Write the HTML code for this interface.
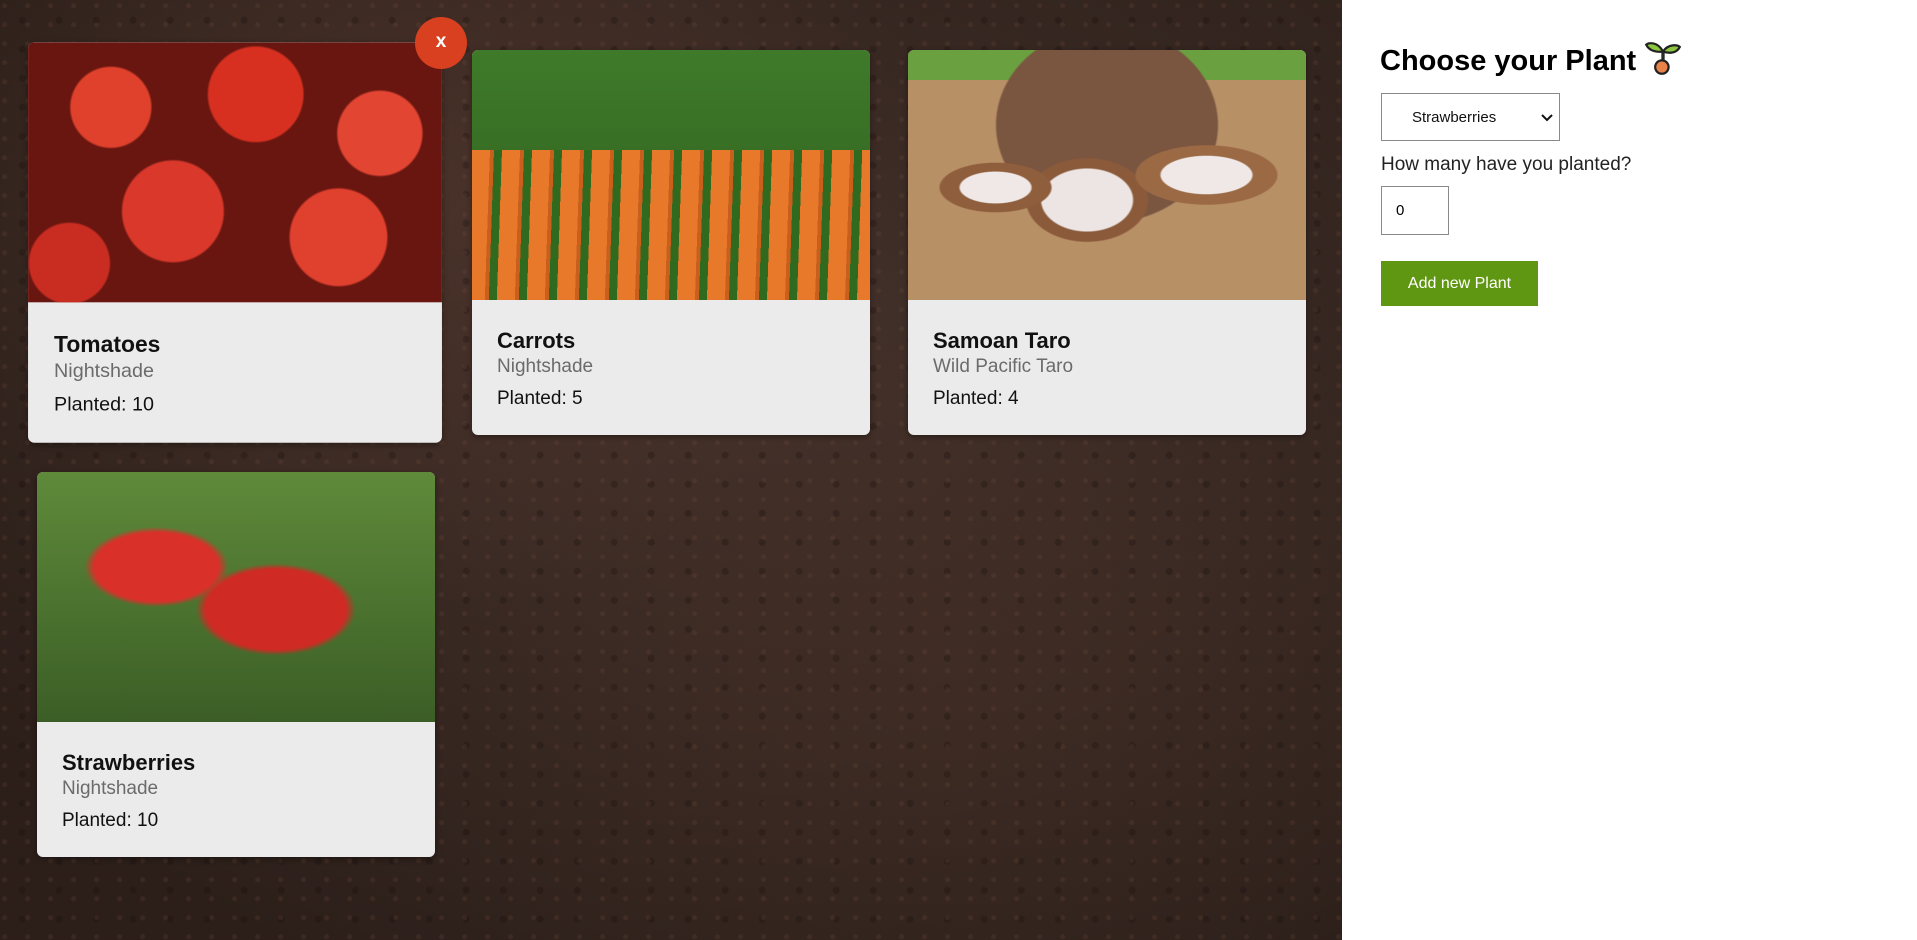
<!DOCTYPE html>
<html><head><meta charset="utf-8"><style>
*{box-sizing:border-box;margin:0;padding:0}
body{width:1917px;height:940px;overflow:hidden;font-family:"Liberation Sans",sans-serif;position:relative;background:#fff}
.soil{position:absolute;left:0;top:0;width:1342px;height:940px;background:
radial-gradient(circle at 20% 30%,rgba(120,80,60,.2) 0 2px,transparent 3px) 0 0/23px 19px,
radial-gradient(circle at 60% 70%,rgba(20,10,8,.25) 0 3px,transparent 4px) 0 0/37px 29px,
radial-gradient(ellipse at 30% 20%,rgba(90,60,48,.5),transparent 40%),
radial-gradient(ellipse at 70% 70%,rgba(70,48,38,.5),transparent 45%),
radial-gradient(ellipse at 60% 40%,#42302a,#2c1f1a 85%);}
.card{position:absolute;width:398px;height:385px;background:#ebebeb;border-radius:6px;overflow:hidden;box-shadow:0 2px 6px rgba(0,0,0,.35)}
.img{height:250px;position:relative;overflow:hidden}
.t{position:absolute;left:25px;top:28px;font-size:22px;font-weight:bold;color:#111}
.s{position:absolute;left:25px;top:56px;font-size:19px;color:#6b6b6b}
.p{position:absolute;left:25px;top:88px;font-size:19px;color:#111}
.txt{position:relative}
.x{position:absolute;width:52px;height:52px;border-radius:50%;background:#d8401f;color:#fff;font-size:19px;text-align:center;line-height:50px;font-weight:bold}
.side{position:absolute;left:1342px;top:0;width:575px;height:940px;background:#fff}
h1{position:absolute;left:38px;top:38px;font-size:29px;font-weight:bold;color:#000}
.sel{position:absolute;left:39px;top:93px;width:179px;height:48px;border:1px solid #8a8a8a;font-size:15px;padding:15px 0 0 30px;color:#111}
.lab{position:absolute;left:39px;top:154px;font-size:19px;color:#222}
.num{position:absolute;left:39px;top:186px;width:68px;height:49px;border:1px solid #8a8a8a;font-size:15px;padding:15px 0 0 14px}
.btn{position:absolute;left:39px;top:261px;width:157px;height:45px;background:#5f9612;color:#fff;font-size:16px;text-align:center;line-height:45px}
</style></head><body>
<div class="soil"></div>

<div class="card" style="left:36px;top:50px;transform:scale(1.04)">
<div class="img" style="background:
radial-gradient(circle at 20% 25%,#e0412c 0 38px,transparent 40px),
radial-gradient(circle at 55% 20%,#d73020 0 45px,transparent 47px),
radial-gradient(circle at 85% 35%,#e24532 0 40px,transparent 42px),
radial-gradient(circle at 35% 65%,#d9382a 0 48px,transparent 50px),
radial-gradient(circle at 75% 75%,#e0402e 0 46px,transparent 48px),
radial-gradient(circle at 10% 85%,#c92d22 0 38px,transparent 40px),
#6a1610"></div>
<div class="txt"><div class="t">Tomatoes</div><div class="s">Nightshade</div><div class="p">Planted: 10</div></div>
</div>
<div class="x" style="left:415px;top:17px">x</div>

<div class="card" style="left:472px;top:50px">
<div class="img" style="background:
repeating-linear-gradient(92deg,#e8782a 0 18px,#c85f1c 18px 22px,#2f6a1e 22px 30px) 0 100px/100% 150px no-repeat,
linear-gradient(180deg,#3f7a2a,#2d5e1c)"></div>
<div class="txt"><div class="t">Carrots</div><div class="s">Nightshade</div><div class="p">Planted: 5</div></div>
</div>

<div class="card" style="left:908px;top:50px">
<div class="img" style="background:
radial-gradient(ellipse at 75% 50%,#efe8e6 0 45px,#9b6a45 47px 70px,transparent 72px),
radial-gradient(ellipse at 22% 55%,#efe8e6 0 35px,#8f5e3c 37px 55px,transparent 57px),
radial-gradient(ellipse at 45% 60%,#ede5e3 0 45px,#8a5a3a 47px 60px,transparent 62px),
radial-gradient(ellipse at 50% 30%,#7a5540 0 110px,transparent 112px),
linear-gradient(180deg,#6aa040 0 12%,#b89066 12%)"></div>
<div class="txt"><div class="t">Samoan Taro</div><div class="s">Wild Pacific Taro</div><div class="p">Planted: 4</div></div>
</div>

<div class="card" style="left:37px;top:472px">
<div class="img" style="background:
radial-gradient(ellipse at 30% 38%,#d9302a 0 62px,transparent 72px),
radial-gradient(ellipse at 60% 55%,#cf2a24 0 70px,transparent 80px),
linear-gradient(180deg,#5f8a3a,#3b5e26)"></div>
<div class="txt"><div class="t">Strawberries</div><div class="s">Nightshade</div><div class="p">Planted: 10</div></div>
</div>

<div class="side">
<h1>Choose your Plant <svg width="38" height="38" viewBox="0 0 34 34" style="vertical-align:-6px"><path d="M17 22 V12" stroke="#2a2a2a" stroke-width="3" fill="none"/><path d="M17 12 C12 3 4 4 2 6 C5 12 12 13 17 12Z" fill="#8cc63f" stroke="#222" stroke-width="2"/><path d="M17 12 C22 5 30 6 32 8 C29 14 22 14 17 12Z" fill="#8cc63f" stroke="#222" stroke-width="2"/><circle cx="16" cy="26" r="6" fill="#e8834a" stroke="#222" stroke-width="2"/></svg></h1>
<div class="sel">Strawberries<svg width="12" height="8" viewBox="0 0 12 8" style="position:absolute;right:6px;top:20px"><path d="M1 1 L6 6 L11 1" stroke="#111" stroke-width="2" fill="none"/></svg></div>
<div class="lab">How many have you planted?</div>
<div class="num">0</div>
<div class="btn">Add new Plant</div>
</div>
</body></html>
